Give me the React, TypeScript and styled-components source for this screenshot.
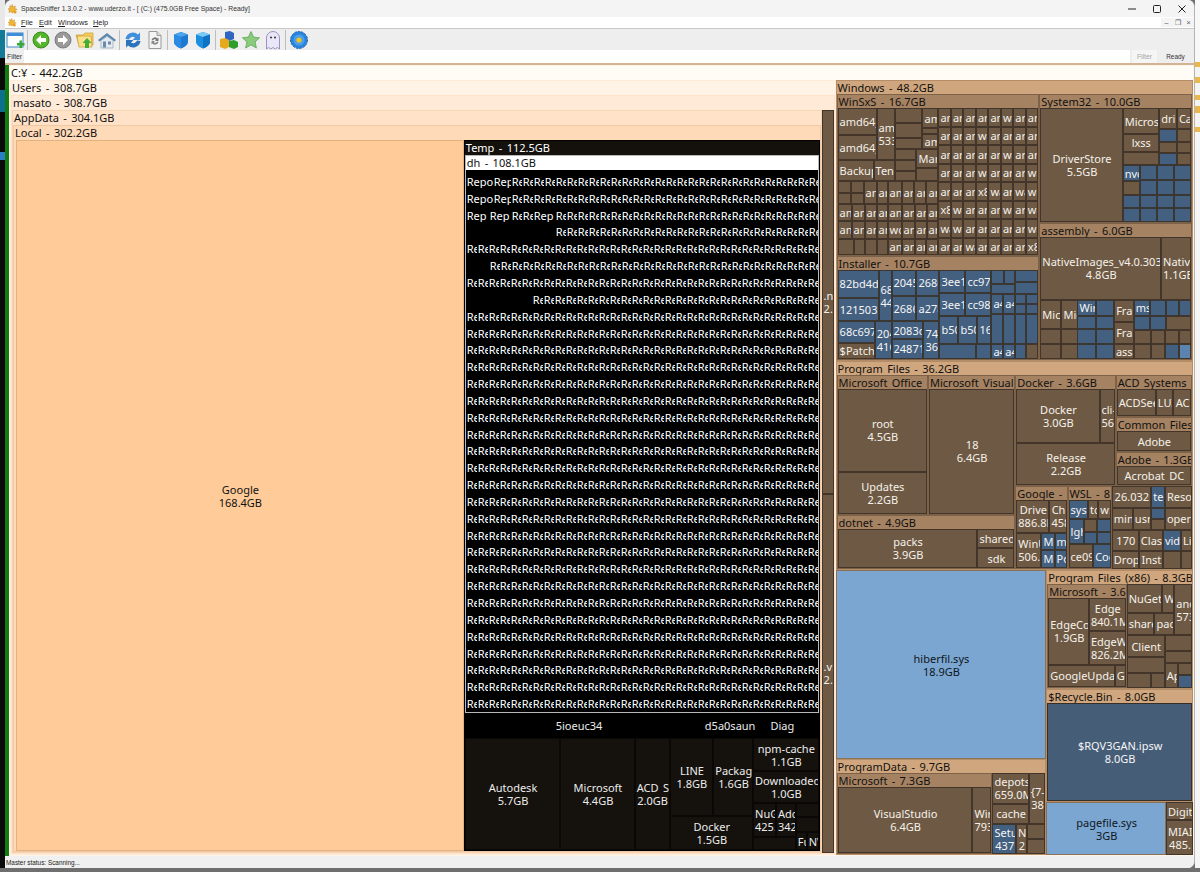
import React from 'react';
import styled, { createGlobalStyle } from 'styled-components';

type Tone = 'brown' | 'blue' | 'pale' | 'sky' | 'steel' | 'peach' | 'night' | 'black';
type Frame = 'root' | 'users' | 'masato' | 'appdata' | 'local' | 'tan' | 'sub' | 'temp' | 'dh';

type Node =
  | { kind: 'tile'; size: number; label: string; tone: Tone }
  | { kind: 'split'; size: number; dir: 'row' | 'column'; kids: Node[] }
  | { kind: 'group'; size: number; label: string; frame: Frame; body: Node }
  | { kind: 'rep'; size: number };

const t = (size: number, label = '', tone: Tone = 'brown'): Node => ({ kind: 'tile', size, label, tone });
const b = (size: number, label = ''): Node => t(size, label, 'blue');
const row = (size: number, ...kids: Node[]): Node => ({ kind: 'split', size, dir: 'row', kids });
const col = (size: number, ...kids: Node[]): Node => ({ kind: 'split', size, dir: 'column', kids });
const group = (size: number, label: string, frame: Frame, body: Node): Node => ({ kind: 'group', size, label, frame, body });

// the 12.5px wide strip of component store folders, row by row
const sxsRow = (size: number, names: string) => row(size, ...names.split(' ').map((n) => t(12.5, n)));

const winSxS = row(0,
  col(101,
    row(73,
      col(57,
        row(52,
          col(39, t(27, 'amd64_'), t(25, 'amd64_')),
          t(18, 'am\n533')),
        row(21, t(36, 'Backup'), t(21, 'Ten'))),
      col(44,
        row(41,
          col(28, t(15), t(15), t(11)),
          col(16, t(20, 'am'), t(6), t(15, 'am'))),
        row(32,
          col(22, t(11), t(11), t(10)),
          col(22, t(19, 'Man'), t(13))))),
    row(23,
      col(13, t(12), t(11)), col(13, t(12), t(11)),
      t(13, 'an'), t(11, 'ar'), t(14, 'an'), t(13, 'ar'), t(12, 'an'), t(12, 'ar')),
    row(16, t(14, 'an'), t(13, 'an'), t(12, 'an'), t(11, 'ar'), t(14, 'an'), t(13, 'ar'), t(12, 'an'), t(12, 'ar')),
    row(18, t(14, 'an'), t(13, 'an'), t(12, 'an'), t(11, 'ar'), t(14, 'wc'), t(13, 'ar'), t(12, 'an'), t(12, 'ar')),
    row(16, t(16), t(11), t(12), t(11), t(14, 'an'), t(13, 'ar'), t(12, 'an'), t(12, 'ar'))),
  col(100,
    sxsRow(18, 'an ar an ar an wa ar ar'),
    sxsRow(18, 'an ar an wa an ar ar ar'),
    sxsRow(18, 'an ar an ar an wa ar ar'),
    sxsRow(18, 'an ar an wa an ar ar wa'),
    sxsRow(18, 'an ar an x8 wa ar wa wa'),
    sxsRow(18, 'x8 wa an ar an wa ar wa'),
    sxsRow(18, 'wa wa an ar an ar ar wa'),
    sxsRow(17, 'an ar wa ar an ar ar x8')));

const installer = row(0,
  col(54,
    row(50, col(41, b(27, '82bd4d'), b(23, '121503')), b(13, '68\n44')),
    row(37, col(38, b(21, '68c697'), t(16, '$Patch')), b(17, '204\n416'))),
  col(48,
    row(25, b(25, '2045'), b(23, '2686')),
    row(25, b(25, '2686'), b(23, 'a278')),
    row(37, col(32, b(17, '2083d'), b(20, '24871')), b(16, '74(\n36('))),
  col(52,
    row(22, b(26, '3ee1'), b(26, 'cc97')),
    row(23, b(26, '3ee1'), b(26, 'cc98')),
    row(27, b(19, 'b50'), b(19, 'b50'), b(14, '16')),
    row(15, b(37), b(15))),
  col(47,
    row(23, col(24, row(14, b(13), b(11)), b(9)), col(23, b(12), b(11))),
    row(20, b(12, 'a4'), b(12, 'a4'), col(11, b(10), b(10)), col(12, b(10), b(10))),
    row(29, b(12), b(12), b(11), b(12)),
    row(15, b(12, 'a4'), b(12, 'a4'), b(11), t(12))));

const blueColumn = (size: number) => col(size, b(15), b(14), b(13), b(14));

const system32 = row(0,
  t(82, 'DriverStore\n5.5GB'),
  col(68,
    row(56,
      col(36, t(26, 'Microso'), t(17, 'lxss'), t(13)),
      col(18, t(21, 'dri'), b(12), t(11), b(12)),
      col(14, t(21, 'Ca'), t(12), t(11), t(12))),
    row(56,
      col(17, b(16, 'nvc'), t(13), b(13), b(14)),
      blueColumn(17), blueColumn(17), blueColumn(17))));

const assembly = col(0,
  row(62, t(121, 'NativeImages_v4.0.303\n4.8GB'), t(30, 'Nativ\n1.1GB')),
  row(59,
    col(37, row(29, t(21, 'Mici'), t(16, 'Mic')), row(15, t(21), t(16)), row(15, t(21), t(16))),
    col(36, row(29, col(18, b(16, 'Wir'), b(13)), col(18, b(16), b(13))), row(15, b(18), b(18)), row(15, b(18), b(18))),
    col(20, t(22, 'Fra'), t(22, 'Fra'), t(15, 'ass')),
    col(57,
      row(30,
        col(32, row(16, b(16, 'ms'), b(16)), row(14, b(16), b(16))),
        col(25, row(16, b(13), b(12)), t(14))),
      row(14, t(17), t(14), t(14), t(12)),
      row(15, t(17), t(14), b(14), t(12, '', 'pale')))));

const programFiles = row(0,
  col(178,
    row(139,
      group(91, 'Microsoft Office -', 'sub', col(0, t(84, 'root\n4.5GB'), t(42, 'Updates\n2.2GB'))),
      group(87, 'Microsoft Visual', 'sub', t(0, '18\n6.4GB'))),
    group(54, 'dotnet - 4.9GB', 'sub', row(0, t(140, 'packs\n3.9GB'), col(37, t(19, 'shared'), t(19, 'sdk'))))),
  col(176,
    row(110,
      group(100, 'Docker - 3.6GB', 'sub', col(0, row(53, t(83, 'Docker\n3.0GB'), t(15, 'cli-\n56')), t(41, 'Release\n2.2GB'))),
      col(76,
        group(42, 'ACD Systems -', 'sub', row(0, t(40, 'ACDSee'), t(18, 'LUX'), t(18, 'AC'))),
        group(35, 'Common Files', 'sub', t(0, 'Adobe')),
        group(33, 'Adobe - 1.3GB', 'sub', t(0, 'Acrobat DC')))),
    row(83,
      group(52, 'Google - 1', 'sub',
        col(0,
          row(33, t(33, 'Drive\n886.8M'), t(17, 'Ch\n458')),
          row(35, t(25, 'WinU\n506.5'), col(25, row(17, b(13, 'Mi'), b(12, 'm')), row(18, b(13, 'Mi'), b(12, 'Po')))))),
      group(44, 'WSL - 8', 'sub',
        col(0,
          row(19, b(19, 'syst'), t(10, 'tc'), t(12, 'w:')),
          row(24, b(15, 'lgh'), col(26, row(12, t(13), b(13)), row(12, b(13), b(13)))),
          row(23, t(24, 'ce09'), b(17, 'Coc')))),
      col(80,
        row(44,
          col(39, t(22, '26.032'), row(22, t(21, 'min'), t(18, 'usr'))),
          col(14, b(22, 'te'), b(11), t(11)),
          col(27, t(22, 'Reso'), t(22, 'open'))),
        row(21, t(27, '170'), t(24, 'Clas'), b(18, 'vid'), t(11, 'Li')),
        row(18, t(27, 'Drop'), t(24, 'Inst'), t(18), t(11))))));

const programFilesX86 = row(0,
  group(79, 'Microsoft - 3.6G', 'sub',
    col(0,
      row(64, t(41, 'EdgeCo\n1.9GB'), col(37, t(32, 'Edge\n840.1M'), t(32, 'EdgeW\n826.2M'))),
      row(20, t(67, 'GoogleUpdat'), t(11, 'G')))),
  col(65,
    row(50,
      col(47, row(28, t(35, 'NuGet'), t(11, 'W')), row(22, t(27, 'share'), t(19, 'pac'))),
      t(17, 'and\n573')),
    row(52,
      col(38, t(22, 'Client'), t(15), row(15, t(24), t(14))),
      col(27, t(16), t(11), row(25, t(13, 'Ap'), col(14, t(12), b(13)))))));

const programData = row(0,
  group(155, 'Microsoft - 7.3GB', 'sub', row(0, t(135, 'VisualStudio\n6.4GB'), t(19, 'Wir\n793'))),
  col(52,
    row(50, col(36, t(30, 'depots\n659.0M'), t(19, 'cache')), t(16, '{7-\n38')),
    row(30, b(23, 'Setu\n437'), t(10, 'N\n2'), col(18, t(15), t(15)))));

const windowsFolder = row(0,
  col(202,
    group(161, 'WinSxS - 16.7GB', 'sub', winSxS),
    group(103, 'Installer - 10.7GB', 'sub', installer)),
  col(152,
    group(128, 'System32 - 10.0GB', 'sub', system32),
    group(136, 'assembly - 6.0GB', 'sub', assembly)));

const rightSide = col(358,
  group(281, 'Windows - 48.2GB', 'tan', windowsFolder),
  group(209, 'Program Files - 36.2GB', 'tan', programFiles),
  row(285,
    col(211,
      t(189, 'hiberfil.sys\n18.9GB', 'sky'),
      group(96, 'ProgramData - 9.7GB', 'tan', programData)),
    col(147,
      group(119, 'Program Files (x86) - 8.3GB', 'tan', programFilesX86),
      group(113, '$Recycle.Bin - 8.0GB', 'tan', t(0, '$RQV3GAN.ipsw\n8.0GB', 'steel')),
      row(53, t(120, 'pagefile.sys\n3GB', 'sky'), col(27, t(17, 'Digit'), t(34, 'MIAI\n485.'))))));

const n = (size: number, label = '') => t(size, label, 'night');

const tempFolder = col(0,
  group(559, 'dh - 108.1GB', 'dh', { kind: 'rep', size: 0 }),
  row(25, t(229, '5ioeuc34', 'black'), t(75, 'd5a0saun', 'black'), t(30, 'Diag', 'black'), t(22, '', 'black')),
  row(112,
    n(96, 'Autodesk\n5.7GB'), n(75, 'Microsoft\n4.4GB'), n(35, 'ACD S\n2.0GB'),
    col(84, row(78, n(44, 'LINE\n1.8GB'), n(40, 'Packag\n1.6GB')), n(34, 'Docker\n1.5GB')),
    col(66,
      n(33, 'npm-cache\n1.1GB'), n(32, 'Downloaded\n1.0GB'),
      row(47,
        col(43, row(34, n(23, 'NuG\n425.'), n(20, 'Adc\n342')), n(13)),
        col(23, n(14), n(15), row(18, n(11, 'Fu'), n(12, 'NV')))))));

const treemap = group(0, 'C:¥ - 442.2GB', 'root', row(0,
  group(827, 'Users - 308.7GB', 'users',
    group(0, 'masato - 308.7GB', 'masato', row(0,
      group(810, 'AppData - 304.1GB', 'appdata',
        group(0, 'Local - 302.2GB', 'local', row(0,
          t(448, 'Google\n168.4GB', 'peach'),
          group(356, 'Temp - 112.5GB', 'temp', tempFolder)))),
      col(12, t(385, '.n\n2.'), t(360, '.v:\n2.'))))),
  rightSide));

const tones: Record<Tone, { bg: string; line: string; ink: string }> = {
  brown: { bg: '#6e5a44', line: '#43352a', ink: '#f5f1ea' },
  blue: { bg: '#446080', line: '#3a3733', ink: '#f5f5f5' },
  pale: { bg: '#5b85b0', line: '#43352a', ink: '#f5f5f5' },
  sky: { bg: '#7ba6d2', line: '#8a7055', ink: '#10161c' },
  steel: { bg: '#465d78', line: '#372e28', ink: '#f5f5f5' },
  peach: { bg: '#ffcc99', line: '#e3b283', ink: '#111111' },
  night: { bg: '#15110d', line: '#0a0806', ink: '#ececec' },
  black: { bg: '#000000', line: '#000000', ink: '#ececec' },
};

const frames: Record<Frame, { bg: string; line: string; ink: string; head: number; pad: number }> = {
  root: { bg: '#fffbf5', line: '#fff4e8', ink: '#111', head: 15, pad: 0 },
  users: { bg: '#fff3e6', line: '#ffebd8', ink: '#111', head: 15, pad: 0 },
  masato: { bg: '#ffead8', line: '#ffe2c9', ink: '#111', head: 15, pad: 0 },
  appdata: { bg: '#ffe2c7', line: '#f6d4b4', ink: '#111', head: 15, pad: 0 },
  local: { bg: '#ffdab8', line: '#efc8a4', ink: '#111', head: 15, pad: 2 },
  tan: { bg: '#cfa67d', line: '#b38d67', ink: '#111', head: 14, pad: 0 },
  sub: { bg: '#a58261', line: '#7d624a', ink: '#111', head: 14, pad: 0 },
  temp: { bg: '#14100c', line: '#000000', ink: '#fff', head: 15, pad: 0 },
  dh: { bg: '#ffffff', line: '#b9b9b9', ink: '#111', head: 15, pad: 0 },
};

const GlobalStyle = createGlobalStyle`
  html, body {
    margin: 0;
    padding: 0;
    background: #6f6f6f;
    overflow: hidden;
  }
`;

const Screen = styled.div`
  width: 1200px;
  height: 872px;
  display: flex;
  flex-direction: column;
  background: #6f6f6f;
  font-family: "Liberation Sans", sans-serif;
`;

const Desktop = styled.div`
  flex: 0 0 868px;
  display: flex;
  min-height: 0;
`;

const LeftEdge = styled.div`
  flex: 0 0 5px;
  display: flex;
  flex-direction: column;
  background: #0b0b0b;
`;

const RightEdge = styled.div`
  flex: 0 0 5px;
  display: flex;
  flex-direction: column;
  background: #f6f6f6;
`;

const EdgeBand = styled.div<{ $h: number; $c: string }>`
  flex: 0 0 ${(p) => p.$h}px;
  background: ${(p) => p.$c};
`;

const AppWindow = styled.div`
  flex: 1;
  min-width: 0;
  display: flex;
  flex-direction: column;
  border-right: 1px solid #b4b4b4;
  border-radius: 7px 7px 7px 0;
  overflow: hidden;
  background: #f0f0f0;
`;

const TitleBar = styled.div`
  flex: 0 0 17px;
  display: flex;
  align-items: center;
  background: #f4f4f4;
  color: #333;
  font-size: 6.8px;
  padding-left: 3px;
`;

const TitleText = styled.span`
  margin-left: 3px;
  flex: 1;
`;

const WinButton = styled.div`
  width: 25px;
  display: flex;
  justify-content: center;
  color: #222;
`;

const MenuBar = styled.div`
  flex: 0 0 11px;
  display: flex;
  align-items: center;
  background: #ffffff;
  font-size: 7.4px;
  color: #222;
  padding-left: 3px;
`;

const MenuLogo = styled.div`
  flex: 0 0 13px;
  display: flex;
`;

const MenuItem = styled.span<{ $w: number }>`
  flex: 0 0 ${(p) => p.$w}px;
  &::first-letter {
    text-decoration: underline;
  }
`;

const MenuSpacer = styled.div`
  flex: 1;
`;

const MdiButton = styled.div`
  flex: 0 0 11px;
  height: 9px;
  display: flex;
  align-items: center;
  justify-content: center;
  background: #f4f4f4;
  color: #556;
  font-size: 7px;
  line-height: 7px;
`;

const Toolbar = styled.div`
  flex: 0 0 22px;
  display: flex;
  align-items: center;
  background: #eeeeee;
  border-top: 1px solid #c8c8c8;
  margin-left: -1px;
  box-sizing: border-box;
`;

const Tool = styled.div`
  flex: 0 0 22px;
  height: 20px;
  display: flex;
  align-items: center;
  justify-content: center;
`;

const ToolGap = styled.div`
  flex: 0 0 1px;
  height: 20px;
  margin: 0 2px 0 1px;
  background: #bdbdbd;
`;

const FilterBar = styled.div`
  flex: 0 0 13px;
  display: flex;
  align-items: stretch;
  background: #eeeeee;
  font-size: 6.8px;
  color: #333;
`;

const FilterLabel = styled.div`
  flex: 0 0 19px;
  display: flex;
  align-items: center;
  padding-left: 2px;
  box-sizing: border-box;
`;

const FilterInput = styled.div`
  flex: 1;
  background: #ffffff;
`;

const FilterButton = styled.div`
  flex: 0 0 25px;
  margin-left: 2px;
  display: flex;
  align-items: center;
  justify-content: center;
  background: #f5f5f5;
  color: #a5a5a5;
`;

const ReadyLabel = styled.div`
  flex: 0 0 37px;
  display: flex;
  align-items: center;
  justify-content: center;
  font-size: 6.4px;
`;

const MapArea = styled.div`
  flex: 1;
  min-height: 0;
  display: flex;
  border-top: 2px solid #d4b294;
`;

const GreenBar = styled.div`
  flex: 0 0 4px;
  background: #0f7d10;
`;

const StatusBar = styled.div`
  flex: 0 0 12px;
  display: flex;
  align-items: center;
  padding-left: 1px;
  font-size: 6.4px;
  color: #222;
  background: #f0f0f0;
`;

const Box = styled.div.attrs<{ $size: number }>((p) => ({
  style: { flex: `1 1 ${p.$size}px` },
}))<{ $size: number }>`
  min-width: 0;
  min-height: 0;
  box-sizing: border-box;
  overflow: hidden;
  font-family: "Noto Sans", sans-serif;
  font-size: 11px;
  word-spacing: 1.5px;
  line-height: 13px;
`;

const Split = styled(Box)<{ $dir: 'row' | 'column' }>`
  display: flex;
  flex-direction: ${(p) => p.$dir};
`;

const Tile = styled(Box)<{ $tone: Tone }>`
  display: flex;
  flex-direction: column;
  align-items: safe center;
  justify-content: safe center;
  padding-left: 1px;
  background: ${(p) => tones[p.$tone].bg};
  border: 1px solid ${(p) => tones[p.$tone].line};
  color: ${(p) => tones[p.$tone].ink};
  white-space: nowrap;
`;

const TileLine = styled.span`
  flex: 0 0 13px;
`;

const Folder = styled(Box)<{ $frame: Frame }>`
  display: flex;
  flex-direction: column;
  padding: 0 0 0 ${(p) => frames[p.$frame].pad}px;
  background: ${(p) => frames[p.$frame].bg};
  border: 1px solid ${(p) => frames[p.$frame].line};
  color: ${(p) => frames[p.$frame].ink};
`;

const FolderHead = styled.div<{ $frame: Frame }>`
  flex: 0 0 ${(p) => frames[p.$frame].head - 1}px;
  margin-left: ${(p) => -frames[p.$frame].pad}px;
  padding-left: 1px;
  white-space: nowrap;
  overflow: hidden;
`;

const RepGrid = styled(Box)`
  display: flex;
  flex-direction: column;
  padding-top: 3px;
  background: #000000;
  color: #ffffff;
`;

const RepRow = styled.div`
  flex: 1;
  display: flex;
  align-items: center;
  min-height: 0;
`;

const RepCell = styled.div<{ $w: number }>`
  flex: 0 0 ${(p) => p.$w}px;
  box-sizing: border-box;
  border-left: 1px solid #000000;
  overflow: hidden;
  white-space: nowrap;
`;

const full = Array(32).fill(11);
const tail = (count: number) => Array(count).fill(11);
const repRows: { blank: number; cells: number[] }[] = [
  { blank: 0, cells: [27, 18, 11, 11, 11, 11, ...tail(24)] },
  { blank: 0, cells: [27, 18, 11, 11, 11, 11, ...tail(24)] },
  { blank: 0, cells: [23, 22, 11, 11, 22, ...tail(24)] },
  { blank: 89, cells: tail(24) },
  { blank: 0, cells: full },
  { blank: 23, cells: tail(30) },
  { blank: 0, cells: full },
  { blank: 66, cells: tail(26) },
  ...Array.from({ length: 24 }, () => ({ blank: 0, cells: full })),
];

const repLabel = (w: number) => (w > 24 ? 'Repo' : w > 12 ? 'Rep' : 'Re');

const Reports = () => (
  <RepGrid $size={0}>
    {repRows.map((r, i) => (
      <RepRow key={i}>
        {r.blank > 0 && <RepCell $w={r.blank} />}
        {r.cells.map((w, j) => (
          <RepCell key={j} $w={w}>{repLabel(w)}</RepCell>
        ))}
      </RepRow>
    ))}
  </RepGrid>
);

const MapNode = ({ node }: { node: Node }) => {
  if (node.kind === 'tile') {
    return (
      <Tile $size={node.size} $tone={node.tone}>
        {node.label && node.label.split('\n').map((line, i) => <TileLine key={i}>{line}</TileLine>)}
      </Tile>
    );
  }
  if (node.kind === 'split') {
    return (
      <Split $size={node.size} $dir={node.dir}>
        {node.kids.map((k, i) => <MapNode key={i} node={k} />)}
      </Split>
    );
  }
  if (node.kind === 'rep') return <Reports />;
  return (
    <Folder $size={node.size} $frame={node.frame}>
      <FolderHead $frame={node.frame}>{node.label}</FolderHead>
      <MapNode node={node.body} />
    </Folder>
  );
};

const AppIcon = ({ size }: { size: number }) => (
  <svg width={size} height={size} viewBox="0 0 12 12">
    <path d="M5 0.5l1 3 3-1-1 3 3 1-3 1 1 3-3-1-1 1.5-1-2-3 1 1-3-2-1 2.5-1-.5-3 2.500 1z" fill="#f2b632" stroke="#b57a12" strokeWidth=".5" />
    <circle cx="8.500" cy="9.500" r="1.800" fill="#e8a020" />
  </svg>
);

const ToolIcon = ({ children }: { children: React.ReactNode }) => (
  <Tool>
    <svg width="20" height="20" viewBox="0 0 20 20">{children}</svg>
  </Tool>
);

const ToolbarIcons = () => (
  <>
    <ToolIcon>
      <rect x="2" y="3" width="16" height="14" fill="#fff" stroke="#3f86c8" />
      <rect x="2" y="3" width="16" height="3" fill="#3f8fd8" />
      <path d="M14.500 10.500h2.500v2.500h2.500v2.500h-2.500v2.500h-2.500v-2.500h-2.500v-2.500h2.500z" fill="#38a838" />
    </ToolIcon>
    <ToolGap />
    <ToolIcon>
      <circle cx="10" cy="10" r="8" fill="#55b52a" stroke="#3a8a1d" />
      <path d="M10 5l-5 5 5 5v-3h5v-4h-5z" fill="#fff" />
    </ToolIcon>
    <ToolIcon>
      <circle cx="10" cy="10" r="8" fill="#9a9a9a" stroke="#7c7c7c" />
      <path d="M10 5l5 5-5 5v-3h-5v-4h5z" fill="#fff" />
    </ToolIcon>
    <ToolIcon>
      <path d="M1 5h7l2-2h8v12H4z" fill="#f6cf5c" stroke="#c99a30" strokeWidth=".7" />
      <path d="M2 6h14l1 11H4z" fill="#fbe08c" stroke="#c99a30" strokeWidth=".7" />
      <path d="M12 8l4.500 5H14v5h-4v-5H7.500z" fill="#46ad38" />
    </ToolIcon>
    <ToolIcon>
      <path d="M1 10l9-7 9 7-1.500 1.500L10 6l-7.500 5.500z" fill="#5b87ad" />
      <path d="M4 10.500L10 6.500l6 4V18H4z" fill="#e4ebf2" stroke="#7e9ab3" strokeWidth=".6" />
      <rect x="6" y="11.500" width="3" height="6" fill="#6c8ba8" />
      <rect x="11" y="11.500" width="3" height="3" fill="#6c8ba8" />
    </ToolIcon>
    <ToolGap />
    <ToolIcon>
      <path d="M2.500 9a7.500 7.500 0 0 1 12.500-4.500l2-2v7.500h-7.500l2.500-2.500A4 4 0 0 0 6 9.500z" fill="#3f8fdc" />
      <path d="M17.500 11a7.500 7.500 0 0 1-12.500 4.500l-2 2V10h7.500L8 12.500A4 4 0 0 0 14 10.500z" fill="#2a73bd" />
    </ToolIcon>
    <ToolIcon>
      <path d="M4 1.500h8l4 4v13H4z" fill="#f4f4f4" stroke="#9a9a9a" />
      <path d="M12 1.500v4h4" fill="#ddd" stroke="#9a9a9a" />
      <path d="M6.500 10a3.500 3.500 0 0 1 6-1.500l1-1v3.500H10l1.200-1.200a2 2 0 0 0-3.300.8z" fill="#777" />
      <path d="M13.500 12a3.500 3.500 0 0 1-6 1.500l-1 1V11H10l-1.200 1.200a2 2 0 0 0 3.300-.8z" fill="#8a8a8a" />
    </ToolIcon>
    <ToolGap />
    <ToolIcon>
      <path d="M3 4.500L10 2l7 2.500V12c0 3-4 5.500-7 6.500-3-1-7-3.500-7-6.500z" fill="#1e78d2" />
      <path d="M3 4.500L10 7l7-2.500L10 2z" fill="#4ca4ec" />
      <path d="M3 4.500L10 7v11.500c-3-1-7-3.500-7-6.500z" fill="#2c8ae0" />
    </ToolIcon>
    <ToolIcon>
      <path d="M3 4.500L10 2l7 2.500V12c0 3-4 5.500-7 6.500-3-1-7-3.500-7-6.500z" fill="#1a8fe0" />
      <path d="M3 4.500L10 7l7-2.500L10 2z" fill="#7ccbf6" />
      <path d="M10 7l7-2.500V12c0 3-4 5.500-7 6.500z" fill="#0f72c4" />
    </ToolIcon>
    <ToolGap />
    <ToolIcon>
      <path d="M6 2l5-1 4 2v6l-5 2-4-2z" fill="#2f66c4" />
      <path d="M1 9l5-1 4 2v7l-4 2-5-2z" fill="#e6a91e" />
      <path d="M10 11l5-1 4 2v5l-4 2-5-2z" fill="#2f9c2f" />
    </ToolIcon>
    <ToolIcon>
      <path d="M10 1.500l2.600 5.600 6 .7-4.500 4.100 1.300 6.100-5.400-3.100-5.400 3.100 1.300-6.100L1.400 7.800l6-.7z" fill="#8acb7e" stroke="#5aa652" strokeWidth=".8" />
    </ToolIcon>
    <ToolIcon>
      <path d="M3.500 19V8a6.500 6.500 0 0 1 13 0v11l-2.200-1.500-2.100 1.500-2.200-1.500L7.800 19l-2.100-1.500z" fill="#ebe6f8" stroke="#8f88bd" strokeWidth=".9" />
      <circle cx="8" cy="7.500" r="1.100" fill="#444" />
      <circle cx="12" cy="7.500" r="1.100" fill="#444" />
    </ToolIcon>
    <ToolGap />
    <ToolIcon>
      <circle cx="10" cy="10" r="8.500" fill="#2a84dc" stroke="#1c66b4" strokeDasharray="2.500 1" />
      <circle cx="10" cy="10" r="5.500" fill="#4aa0ea" />
      <circle cx="10" cy="10" r="2.600" fill="#f5c21f" />
    </ToolIcon>
  </>
);

export default function App() {
  return (
    <Screen>
      <GlobalStyle />
      <Desktop>
        <LeftEdge>
          <EdgeBand $h={30} $c="#e8e8e8" />
          <EdgeBand $h={28} $c="#137a98" />
          <EdgeBand $h={32} $c="#0a0a0a" />
          <EdgeBand $h={22} $c="#0f6f8e" />
          <EdgeBand $h={40} $c="#0a0a0a" />
          <EdgeBand $h={8} $c="#2b7fc4" />
        </LeftEdge>
        <AppWindow>
          <TitleBar>
            <AppIcon size={10} />
            <TitleText>SpaceSniffer 1.3.0.2 - www.uderzo.it - [ (C:) (475.0GB Free Space) - Ready]</TitleText>
            <WinButton>
              <svg width="10" height="10" viewBox="0 0 10 10"><path d="M1 5h8" stroke="#222" /></svg>
            </WinButton>
            <WinButton>
              <svg width="10" height="10" viewBox="0 0 10 10"><rect x="1.500" y="1.500" width="7" height="7" rx="1" fill="none" stroke="#222" /></svg>
            </WinButton>
            <WinButton>
              <svg width="10" height="10" viewBox="0 0 10 10"><path d="M1.500 1.500l7 7M8.500 1.500l-7 7" stroke="#222" /></svg>
            </WinButton>
          </TitleBar>
          <MenuBar>
            <MenuLogo><AppIcon size={9} /></MenuLogo>
            <MenuItem $w={18}>File</MenuItem>
            <MenuItem $w={19}>Edit</MenuItem>
            <MenuItem $w={35}>Windows</MenuItem>
            <MenuItem $w={20}>Help</MenuItem>
            <MenuSpacer />
            <MdiButton>–</MdiButton>
            <MdiButton>❐</MdiButton>
            <MdiButton>×</MdiButton>
          </MenuBar>
          <Toolbar>
            <ToolbarIcons />
          </Toolbar>
          <FilterBar>
            <FilterLabel>Filter</FilterLabel>
            <FilterInput />
            <FilterButton>Filter</FilterButton>
            <ReadyLabel>Ready</ReadyLabel>
          </FilterBar>
          <MapArea>
            <GreenBar />
            <MapNode node={treemap} />
          </MapArea>
          <StatusBar>Master status: Scanning...</StatusBar>
        </AppWindow>
        <RightEdge>
          <EdgeBand $h={62} $c="#f8f8f8" />
          <EdgeBand $h={5} $c="#e8b84e" />
          <EdgeBand $h={10} $c="#f4f4f4" />
          <EdgeBand $h={6} $c="#e8b84e" />
          <EdgeBand $h={12} $c="#f4f4f4" />
          <EdgeBand $h={5} $c="#e8b84e" />
          <EdgeBand $h={6} $c="#f4f4f4" />
          <EdgeBand $h={7} $c="#e8b84e" />
          <EdgeBand $h={14} $c="#f4f4f4" />
          <EdgeBand $h={5} $c="#e8b84e" />
        </RightEdge>
      </Desktop>
    </Screen>
  );
}
